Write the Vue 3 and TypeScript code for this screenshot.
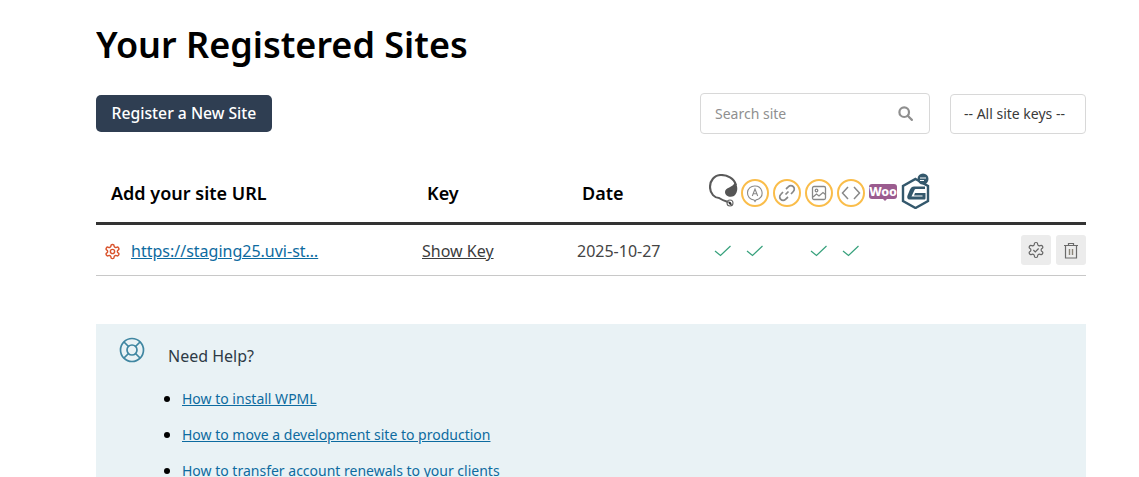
<script setup lang="ts">
const links: string[] = [
  'How to install WPML',
  'How to move a development site to production',
  'How to transfer account renewals to your clients',
]
const gear =
  'M12.22 2h-.44a2 2 0 0 0-2 2v.18a2 2 0 0 1-1 1.73l-.43.25a2 2 0 0 1-2 0l-.15-.08a2 2 0 0 0-2.73.73l-.22.38a2 2 0 0 0 .73 2.73l.15.1a2 2 0 0 1 1 1.72v.51a2 2 0 0 1-1 1.74l-.15.09a2 2 0 0 0-.73 2.73l.22.38a2 2 0 0 0 2.73.73l.15-.08a2 2 0 0 1 2 0l.43.25a2 2 0 0 1 1 1.73V20a2 2 0 0 0 2 2h.44a2 2 0 0 0 2-2v-.18a2 2 0 0 1 1-1.73l.43-.25a2 2 0 0 1 2 0l.15.08a2 2 0 0 0 2.73-.73l.22-.39a2 2 0 0 0-.73-2.73l-.15-.08a2 2 0 0 1-1-1.74v-.5a2 2 0 0 1 1-1.74l.15-.09a2 2 0 0 0 .73-2.73l-.22-.38a2 2 0 0 0-2.73-.73l-.15.08a2 2 0 0 1-2 0l-.43-.25a2 2 0 0 1-1-1.73V4a2 2 0 0 0-2-2z'
</script>

<template>
  <div class="page">
    <h1 class="title">Your Registered Sites</h1>
    <div class="toolbar">
      <button class="primary">Register a New Site</button>
      <div class="filters">
        <div class="search">
          <span class="placeholder">Search site</span>
          <svg width="16" height="16" viewBox="0 0 16 16" fill="none" stroke="#8f8f8f" stroke-width="2.2"><circle cx="6.2" cy="6.2" r="4.8"/><path d="M9.700 9.700 13.900 13.900" stroke-linecap="round"/></svg>
        </div>
        <div class="select">-- All site keys --</div>
      </div>
    </div>

    <div class="thead">
      <div class="c-url th">Add your site URL</div>
      <div class="c-key th">Key</div>
      <div class="c-date th">Date</div>
      <div class="c-icons">
        <svg class="ic-wpml" width="30" height="34" viewBox="0 0 30 34" fill="none">
          <path d="M27 11C25 4 18 1 12 1 5 1 1 7 1 13c0 7 5 11 9 11 3 2 6 3 9 4" stroke="#5a5a5a" stroke-width="2.100"/>
          <path d="M26 8c3 4 3.500 10-1 14-4 2-9 0-9-4 0-5 8-4 10-10Z" fill="#555"/>
          <circle cx="21" cy="29" r="3" stroke="#666" stroke-width="1.100"/>
          <path d="M19 27.500a3 3 0 0 1 3.500 4L20 30Z" fill="#333"/>
        </svg>
        <span class="ring">
          <svg width="20" height="20" viewBox="0 0 20 20" fill="none" stroke="#888" stroke-width="1.1"><path d="M10 3a7 7 0 0 1 4 12.800c-1 .6-2 1-3 1.100L10 18.500 9 17A7 7 0 0 1 10 3Z" /><path d="M7.300 13 10 6l2.700 7M8.200 10.800h3.600"/></svg>
        </span>
        <span class="ring">
          <svg width="18" height="18" viewBox="0 0 18 18" fill="none" stroke="#888" stroke-width="1.700"><path d="M7.500 10.500 10.500 7.500"/><path d="M8 5 10.500 2.700a3.300 3.300 0 0 1 4.800 4.800L13 10"/><path d="M10 13 7.500 15.300a3.300 3.300 0 0 1-4.800-4.800L5 8"/></svg>
        </span>
        <span class="ring">
          <svg width="18" height="18" viewBox="0 0 18 18" fill="none" stroke="#888" stroke-width="1.300"><rect x="2.500" y="2.500" width="13" height="13" rx="1.500"/><circle cx="6.500" cy="6.500" r="1.300"/><path d="M3 13l3.500-3 2.500 2 4-3.500 2.500 2"/></svg>
        </span>
        <span class="ring">
          <svg width="20" height="18" viewBox="0 0 20 18" fill="none" stroke="#888" stroke-width="1.500"><path d="M7 3 1.500 9 7 15M13 3l5.500 6L13 15"/></svg>
        </span>
        <span class="woo"><span class="woo-text">Woo</span></span>
        <svg class="ic-gf" width="30" height="36" viewBox="0 0 30 36" fill="none">
          <path d="M14.500 6 27 13v15l-12.500 7L2 28V13Z" stroke="#34586c" stroke-width="2.400"/>
          <path d="M24 13.500H13c-2 0-3 1-4 3l-2.500 6c-.8 2 0 4 2 4H23c1 0 1.500-.5 1.500-1.500V20H14l-1 2.500h8.500v1H10.500l3-6.500c.3-.7.7-1 1.500-1H24Z" fill="#34586c"/>
          <circle cx="22" cy="6" r="5.500" fill="#34586c"/>
          <path d="M19 5h6M19 7.500h4" stroke="#fff" stroke-width="1"/>
        </svg>
      </div>
    </div>

    <div class="row">
      <div class="c-url site">
        <svg class="gear-red" width="17" height="17" viewBox="0 0 24 24" fill="none" stroke="#d9532c" stroke-width="2"><path :d="gear"/><circle cx="12" cy="12" r="3"/></svg>
        <a class="site-link">https://staging25.uvi-st…</a>
      </div>
      <div class="c-key"><a class="key-link">Show Key</a></div>
      <div class="c-date date">2025-10-27</div>
      <div class="checks">
        <svg v-for="n in 4" :key="n" width="18" height="12" viewBox="0 0 18 12" fill="none" stroke="#37a17c" stroke-width="1.200"><path d="M1 6l5.500 4.500L16.500 1"/></svg>
      </div>
      <div class="actions">
        <span class="act">
          <svg width="18" height="18" viewBox="0 0 24 24" fill="none" stroke="#666" stroke-width="1.600"><path :d="gear"/><path d="M8.500 12l2.500 2.500 4.500-4.500"/></svg>
        </span>
        <span class="act">
          <svg width="16" height="17" viewBox="0 0 16 17" fill="none" stroke="#6a6a6a" stroke-width="1.200"><path d="M1 3.500h14M5.500 3.500V1.500h5v2M2.500 3.500v12.500h11V3.500"/><path d="M6.500 7v6M9.500 7v6" stroke="#8a8478" stroke-width="1.400"/></svg>
        </span>
      </div>
    </div>

    <section class="help">
      <svg class="buoy" width="26" height="26" viewBox="0 0 26 26" fill="none" stroke="#3f86a1" stroke-width="1.700"><circle cx="13" cy="13" r="11.500"/><circle cx="13" cy="13" r="5"/><path d="M5 5l4.500 4.500M21 5l-4.500 4.500M5 21l4.500-4.500M21 21l-4.500-4.500"/></svg>
      <div class="help-body">
        <div class="help-title">Need Help?</div>
        <ul class="help-list">
          <li v-for="l in links" :key="l"><a>{{ l }}</a></li>
        </ul>
      </div>
    </section>
  </div>
</template>

<style>
html, body { margin: 0; height: 477px; overflow: hidden; background: #fff; }
</style>

<style scoped>
.page {
  box-sizing: border-box;
  width: 990px;
  margin-left: 96px;
  font-family: "Noto Sans", sans-serif;
  color: #000;
  height: 477px;
  overflow: hidden;
}
.title {
  margin: 0;
  padding-top: 21px;
  font-size: 36px;
  line-height: 47px;
  font-weight: 600;
}
.toolbar {
  display: flex;
  justify-content: space-between;
  align-items: center;
  margin-top: 25px;
}
.primary {
  width: 176px;
  height: 37px;
  background: #2f3e52;
  color: #fff;
  border: 0;
  border-radius: 5px;
  font: 500 15.700px "Noto Sans", sans-serif;
  padding: 0 0 2px;
}
.filters { display: flex; gap: 20px; align-items: center; }
.search {
  box-sizing: border-box;
  width: 230px;
  height: 41px;
  border: 1px solid #d8d8d8;
  border-radius: 4px;
  display: flex;
  justify-content: space-between;
  align-items: center;
  padding: 0 15px 0 14px;
}
.placeholder { color: #8f8f8f; font-size: 14px; }
.select {
  box-sizing: border-box;
  width: 136px;
  height: 40px;
  border: 1px solid #d8d8d8;
  border-radius: 4px;
  display: flex;
  align-items: center;
  padding-left: 13px;
  font-size: 14px;
  color: #3a3a3a;
}
.thead {
  display: flex;
  align-items: center;
  height: 91px;
  border-bottom: 3px solid #333;
  box-sizing: border-box;
}
.th { font-weight: 600; font-size: 18px; padding-top: 30px; }
.c-url { width: 326px; flex: none; box-sizing: border-box; }
.thead .c-url { padding-left: 15px; }
.c-key { width: 155px; flex: none; }
.thead .c-key { padding-left: 5px; }
.c-date { width: 127px; flex: none; }
.c-icons { display: flex; align-items: center; padding-top: 29px; }
.ic-wpml { margin-right: 2px; margin-top: -3px; }
.ring {
  box-sizing: border-box;
  width: 28px;
  height: 28px;
  border: 2px solid #fabd4a;
  border-radius: 50%;
  display: inline-flex;
  align-items: center;
  justify-content: center;
  margin-right: 4px;
}
.woo {
  width: 28px;
  height: 15px;
  background: #9b5c8f;
  border-radius: 3px;
  display: inline-flex;
  align-items: center;
  justify-content: center;
  margin: 0 4px 2px 0;
  position: relative;
}
.woo::after {
  content: "";
  position: absolute;
  left: 14px;
  bottom: -4px;
  border: 2px solid transparent;
  border-top-color: #9b5c8f;
}
.woo-text { color: #fff; font-weight: 800; font-size: 12.500px; line-height: 15px; letter-spacing: -0.2px; }
.ic-gf { margin-top: -4px; }
.row {
  display: flex;
  align-items: center;
  height: 50px;
  border-bottom: 1px solid #c8c8c8;
  font-size: 16px;
  color: #333;
}
.site { display: flex; align-items: center; gap: 10px; padding-left: 8px; padding-top: 2px; }
.row .c-key, .date, .checks { padding-top: 2px; }
.site-link { color: #0d6ba0; text-decoration: underline; }
.key-link { color: #3c3c3c; text-decoration: underline; }
.date { color: #444; margin-left: -5px; padding-left: 5px; }
.checks { display: flex; width: 159px; padding-left: 10px; box-sizing: border-box; gap: 14px; }
.checks svg:nth-child(3) { margin-left: 32px; }
.actions { margin-left: auto; display: flex; gap: 5px; }
.act {
  width: 30px;
  height: 30px;
  background: #ececec;
  border-radius: 3px;
  display: inline-flex;
  align-items: center;
  justify-content: center;
}
.help {
  margin-top: 48px;
  background: #e9f2f5;
  display: flex;
  padding: 13px 0 0 23px;
  height: 160px;
  box-sizing: border-box;
}
.buoy { flex: none; margin-right: 23px; }
.help-body { padding-top: 7px; }
.help-title { font-size: 16px; line-height: 24px; color: #2e3a45; }
.help-list { margin: 21px 0 0; padding-left: 14px; font-size: 14px; }
.help-list li { height: 36px; line-height: 19px; }
.help-list li::marker { font-size: 16px; }
.help-list a { color: #0d6ba0; text-decoration: underline; }
</style>
